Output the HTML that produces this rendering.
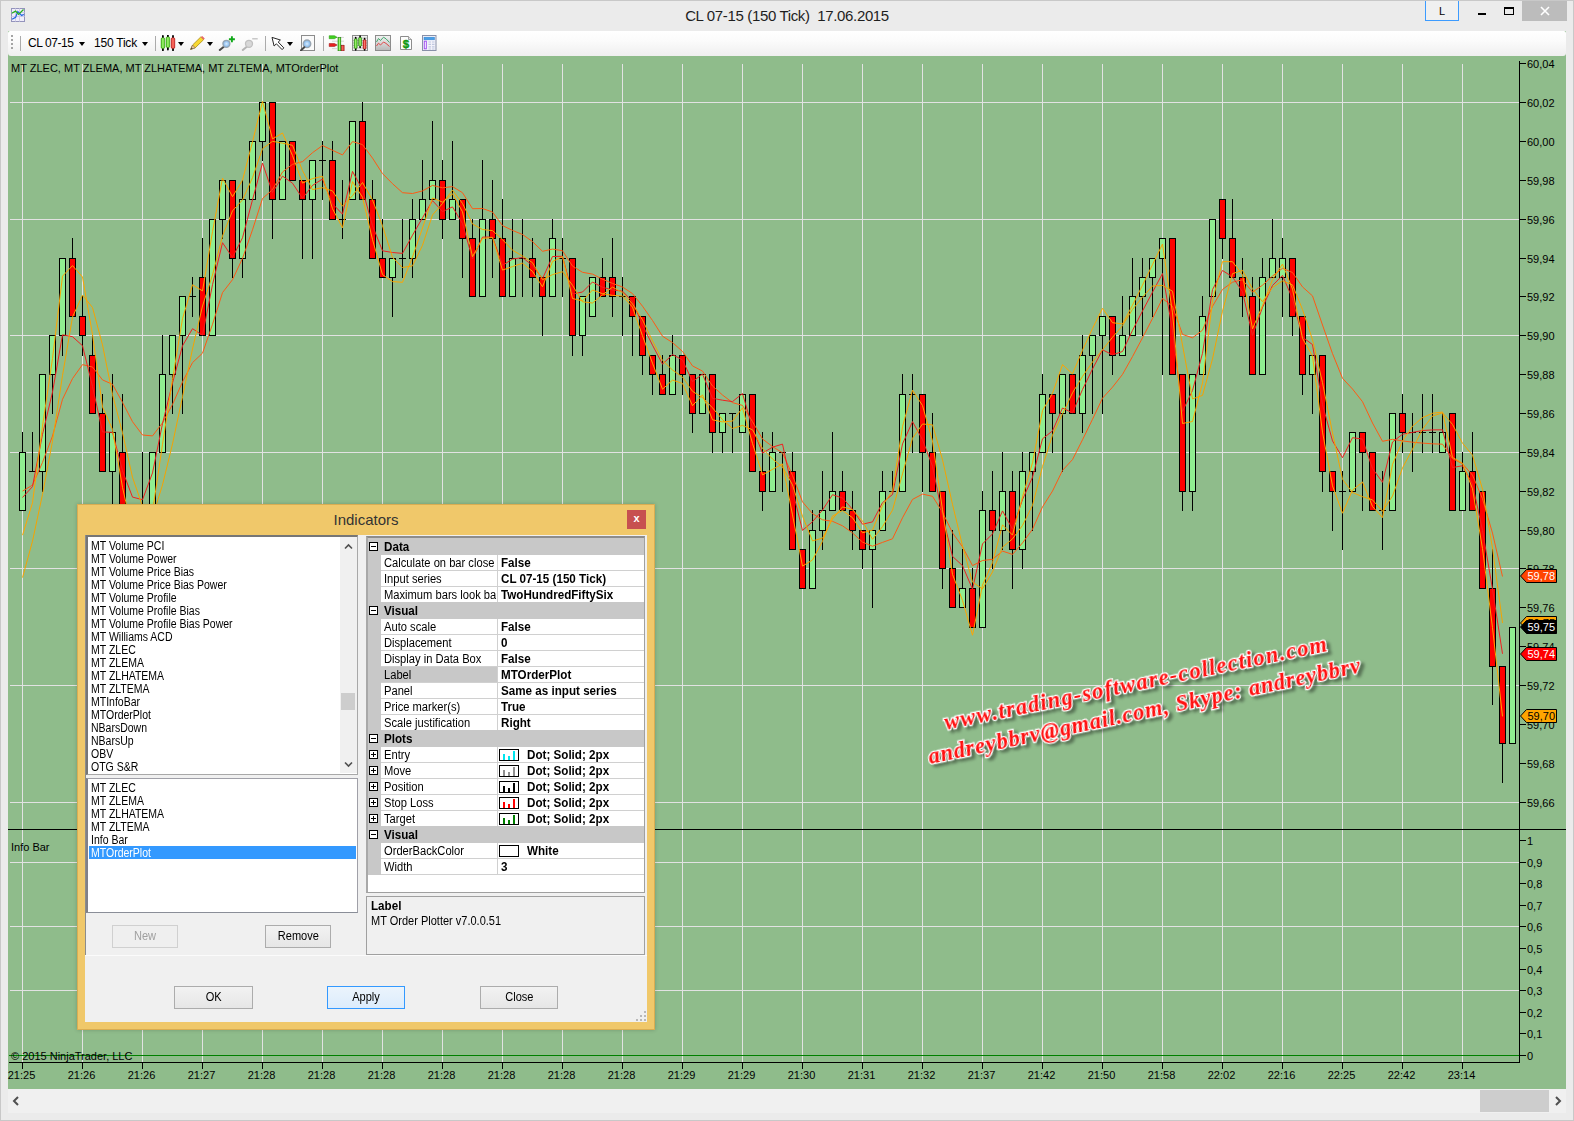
<!DOCTYPE html>
<html><head><meta charset="utf-8"><title>CL 07-15 (150 Tick) 17.06.2015</title>
<style>
html,body{margin:0;padding:0}
body{width:1574px;height:1121px;position:relative;overflow:hidden;background:#ebebeb;font-family:"Liberation Sans",sans-serif;font-size:11px;color:#000}
.abs{position:absolute}
#frame{left:0;top:0;width:1572px;height:1119px;border:1px solid #c8c8c8;box-sizing:content-box}
#title{left:0;top:6px;width:1574px;text-align:center;font-size:15px;line-height:19px;color:#1e1e1e;white-space:pre;letter-spacing:-0.35px}
#tbu{left:8px;top:31px;width:1558px;height:25px;background:#8fbc8b}
#toolbar{left:8px;top:31px;width:1558px;height:25px;border-radius:2px 2px 3px 3px;background:linear-gradient(#ffffff,#fbfbfb 40%,#efefef)}
#chart{left:8px;top:56px;width:1558px;height:1033px;background:#8fbc8b}
#sb{left:8px;top:1089px;width:1558px;height:24px;background:#f0f0f0}
#sbthumb{left:1480px;top:1090px;width:69px;height:22px;background:#cdcdcd}
svg text.ax, .ax{font-family:"Liberation Sans",sans-serif;font-size:11px}
.wm text{font-family:"Liberation Serif",serif;font-style:italic;font-weight:bold;font-size:22.5px;fill:#ff1010;stroke:#fff;stroke-width:2.6px;paint-order:stroke fill;filter:drop-shadow(3px 3px 1.5px rgba(0,0,0,.4))}
.tb{font-size:12px;line-height:14px;color:#000;white-space:pre}
.dd{width:0;height:0;border-left:3.5px solid transparent;border-right:3.5px solid transparent;border-top:4px solid #000}
.sep{width:1px;height:18px;background:#ababab;top:34px}
/* dialog */
#dlg{left:77px;top:504px;width:578px;height:526px;background:#f0c86a;box-sizing:border-box;border:1px solid #d9ad52;box-shadow:0 0 4px rgba(0,0,0,.2)}
#dlgc{left:85px;top:535px;width:562px;height:487px;background:#f0f0f0}
#dtitle{left:77px;top:510px;width:578px;text-align:center;font-size:15px;line-height:20px;color:#333}
#dclose{left:627px;top:510px;width:19px;height:19px;background:#c75050;color:#fff;text-align:center;font-weight:bold;font-size:11px;line-height:17px}
.lb{background:#fff;box-sizing:border-box;border:1px solid #828790}
.li{left:91px;width:300px;height:13px;line-height:13px;font-size:12px;white-space:pre;transform:scaleX(.875);transform-origin:0 0}
.btn{box-sizing:border-box;border:1px solid #acacac;background:linear-gradient(#f2f2f2,#e6e6e6);text-align:center;font-size:12px;line-height:21px;height:23px}
.btn span{display:inline-block;transform:scaleX(.92)}
.pg{font-size:12px;line-height:15px;white-space:pre;height:15px;transform:scaleX(.93);transform-origin:0 0}
.pgb{font-weight:bold;transform:scaleX(.97)}
.box{width:7px;height:7px;border:1px solid #000;background:#fff}
</style></head><body>
<div id="frame" class="abs"></div>
<!-- app icon -->
<svg class="abs" style="left:11px;top:8px" width="14" height="14" viewBox="0 0 14 14"><rect x="0.5" y="0.5" width="13" height="13" fill="#f0eefa" stroke="#9494bc"/><path d="M0.5 4.5H13.5M0.5 8.5H13.5M4.5 0.5V13.5M8.5 0.5V13.5" stroke="#d0cce8" stroke-width="1" fill="none"/><path d="M1.1 11.3L4.6 9.4L6.8 3.6L10.6 7.5L12.8 6.4" stroke="#2468e0" stroke-width="1.3" fill="none"/><path d="M0.7 5.3L4.6 3.1L7.6 6.4L12.5 1.5" stroke="#28b020" stroke-width="1.3" fill="none"/></svg>
<div id="title" class="abs">CL 07-15 (150 Tick)  17.06.2015</div>
<!-- window buttons -->
<div class="abs" style="left:1425px;top:1px;width:32px;height:19px;border:1px solid #3c9bff;border-top:none;background:#f0f0f0;text-align:center;font-size:11px;line-height:20px">L</div>
<div class="abs" style="left:1478px;top:13px;width:8px;height:2px;background:#000"></div>
<div class="abs" style="left:1504px;top:7px;width:8px;height:5px;border:1px solid #000;border-top:2px solid #000;box-sizing:content-box"></div>
<div class="abs" style="left:1522px;top:1px;width:45px;height:20px;background:#bcbcbc"></div>
<svg class="abs" style="left:1540px;top:6px" width="10" height="10" viewBox="0 0 10 10"><path d="M1 1L9 9M9 1L1 9" stroke="#fff" stroke-width="1.6"/></svg>
<div id="tbu" class="abs"></div><div id="toolbar" class="abs"></div>
<div class="abs" style="left:11px;top:35px;width:2px;height:2px;background:#a4a4a4"></div>
<div class="abs" style="left:11px;top:39px;width:2px;height:2px;background:#a4a4a4"></div>
<div class="abs" style="left:11px;top:43px;width:2px;height:2px;background:#a4a4a4"></div>
<div class="abs" style="left:11px;top:47px;width:2px;height:2px;background:#a4a4a4"></div>
<div class="abs sep" style="left:20px;top:36px;height:15px"></div>
<div class="abs tb" style="left:28px;top:36px;letter-spacing:-0.43px">CL 07-15</div>
<div class="abs dd" style="left:79px;top:42px"></div>
<div class="abs tb" style="left:94px;top:36px;letter-spacing:-0.22px">150 Tick</div>
<div class="abs dd" style="left:142px;top:42px"></div>
<div class="abs sep" style="left:155px;top:36px;height:15px"></div>
<svg class="abs" style="left:160px;top:35px" width="17" height="16" viewBox="0 0 17 16">
<defs><linearGradient id="gg" x1="0" x2="1" y1="0" y2="0"><stop offset="0" stop-color="#38c010"/><stop offset=".5" stop-color="#a8f878"/><stop offset="1" stop-color="#38c010"/></linearGradient>
<linearGradient id="rg" x1="0" x2="1" y1="0" y2="0"><stop offset="0" stop-color="#d81818"/><stop offset=".5" stop-color="#ff8070"/><stop offset="1" stop-color="#d81818"/></linearGradient></defs>
<path d="M2.9 1V15.3M7.9 0.3V14.5M13 1V15.3" stroke="#000" stroke-width="1.8" stroke-linecap="round"/>
<rect x="1.1" y="2.8" width="3.6" height="10.6" rx="1.2" fill="url(#gg)" stroke="#2a8a08" stroke-width=".5"/>
<rect x="6.1" y="1.9" width="3.6" height="10.6" rx="1.2" fill="url(#gg)" stroke="#2a8a08" stroke-width=".5"/>
<rect x="11.2" y="2.8" width="3.6" height="10.6" rx="1.2" fill="url(#rg)" stroke="#a01010" stroke-width=".5"/></svg>
<div class="abs dd" style="left:178px;top:42px"></div>
<svg class="abs" style="left:189px;top:35px" width="17" height="16" viewBox="0 0 17 16">
<path d="M1.6 14.4L3.6 10L11.8 1.9L14.6 4.7L6.2 12.8Z" fill="#f8d830" stroke="#a88a10" stroke-width=".8"/>
<path d="M1.6 14.4L3.6 10L6.2 12.8Z" fill="#e8c8a0" stroke="#806040" stroke-width=".6"/><path d="M1.6 14.4L2.5 12.4L3.8 13.6Z" fill="#404040"/>
<path d="M11.8 1.9L13.2 0.9L15.8 3.4L14.6 4.7Z" fill="#e86868"/></svg>
<div class="abs dd" style="left:207px;top:42px"></div>
<svg class="abs" style="left:218px;top:35px" width="18" height="16" viewBox="0 0 18 16">
<defs><radialGradient id="lg"><stop offset="0" stop-color="#d8ecff"/><stop offset="1" stop-color="#78b0e8"/></radialGradient></defs>
<path d="M1.8 15L5.8 11.8" stroke="#484848" stroke-width="2" stroke-linecap="round"/>
<circle cx="8.4" cy="8.8" r="3.5" fill="url(#lg)" stroke="#98a4b0" stroke-width="1.3"/>
<path d="M13.9 1.2V7.2M10.9 4.2H16.9" stroke="#10a818" stroke-width="1.9"/></svg>
<svg class="abs" style="left:241px;top:35px" width="18" height="16" viewBox="0 0 18 16">
<path d="M1.8 15L5.8 11.8" stroke="#b4b4b4" stroke-width="2" stroke-linecap="round"/>
<circle cx="8" cy="8.8" r="3.5" fill="#d8d8d8" stroke="#c0c0c0" stroke-width="1.3"/>
<path d="M11.2 3.8H16.7" stroke="#c0c0c0" stroke-width="1.3"/></svg>
<div class="abs sep" style="left:265px;top:36px;height:15px"></div>
<svg class="abs" style="left:270px;top:35px" width="16" height="16" viewBox="0 0 16 16">
<path d="M2 2.4L10.4 5L8.2 7L13.8 12.9L12.1 14.6L6.4 8.8L4.1 11Z" fill="#fff" stroke="#282828" stroke-width="1" stroke-linejoin="round"/></svg>
<div class="abs dd" style="left:287px;top:42px"></div>
<svg class="abs" style="left:300px;top:35px" width="16" height="16" viewBox="0 0 16 16">
<rect x="1.5" y="0.5" width="13" height="15" fill="#fafafa" stroke="#8c8c8c"/>
<circle cx="7" cy="8.8" r="3.8" fill="url(#lg)" stroke="#98a4b0" stroke-width="1.3"/>
<path d="M0.9 15.4L4.3 12.2" stroke="#484848" stroke-width="2" stroke-linecap="round"/></svg>
<div class="abs sep" style="left:323px;top:36px;height:15px"></div>
<svg class="abs" style="left:328px;top:35px" width="17" height="16" viewBox="0 0 17 16">
<path d="M7 2.4H16M4 6.2H16M7 10H16M4 13.6H9" stroke="#d4d4d4" stroke-width="1"/>
<path d="M1.2 0.7H6.5L9 2.2L6.5 3.7H1.2Z" fill="#40d020" stroke="#209008" stroke-width=".5"/>
<path d="M1.2 8.5H6.5L9 10L6.5 11.5H1.2Z" fill="#e82020" stroke="#981010" stroke-width=".5"/>
<rect x="10" y="2.6" width="2.8" height="13.2" fill="url(#gg)" stroke="#208008" stroke-width=".6"/><rect x="13.6" y="10.3" width="2.5" height="5.5" fill="url(#rg)" stroke="#901010" stroke-width=".6"/></svg>
<svg class="abs" style="left:352px;top:35px" width="16" height="16" viewBox="0 0 16 16">
<rect x="0.5" y="0.5" width="15" height="15" fill="#f0f0f0" stroke="#8c8c8c"/>
<path d="M1 3H15M1 5.5H15M1 8H15M1 10.5H15M1 13H15" stroke="#b0b0b0" stroke-width=".7"/>
<path d="M3.7 2.5V15M8.1 1V12.5M12.6 3.5V15" stroke="#000" stroke-width="1.6" stroke-linecap="round"/>
<rect x="2.2" y="3.8" width="3" height="9.6" rx="1" fill="url(#gg)" stroke="#207008" stroke-width=".5"/>
<rect x="6.6" y="2.4" width="3" height="8.8" rx="1" fill="url(#gg)" stroke="#207008" stroke-width=".5"/>
<rect x="11.1" y="4.8" width="3" height="9.2" rx="1" fill="url(#rg)" stroke="#901010" stroke-width=".5"/></svg>
<svg class="abs" style="left:375px;top:35px" width="16" height="16" viewBox="0 0 16 16">
<defs><linearGradient id="gr3" x1="0" x2="0" y1="0" y2="1"><stop offset="0" stop-color="#f4f4f4"/><stop offset="1" stop-color="#b8b8b8"/></linearGradient></defs>
<rect x="0.5" y="0.5" width="15" height="15" fill="url(#gr3)" stroke="#8c8c8c"/>
<path d="M1.5 7L3.5 3.5L5.5 5.5L8.5 2.2L11 3.8L14.5 7.5" stroke="#30a060" stroke-width=".9" fill="none"/>
<path d="M1.5 11L3.5 8.2L5.5 10L8.5 7L11 8.4L14.5 11.5" stroke="#e03838" stroke-width=".9" fill="none"/></svg>
<svg class="abs" style="left:399px;top:35px" width="14" height="16" viewBox="0 0 14 16">
<path d="M1.5 1.5H9.5L12.5 4.5V14.5H1.5Z" fill="#fdfdfd" stroke="#8c8c8c"/><path d="M9.5 1.5V4.5H12.5" fill="#e4e4e4" stroke="#8c8c8c" stroke-width=".8"/>
<text x="7" y="12.6" text-anchor="middle" font-family="Liberation Sans, sans-serif" font-weight="bold" font-size="11.5" fill="#129812" stroke="#129812" stroke-width=".4">$</text></svg>
<svg class="abs" style="left:422px;top:35px" width="15" height="16" viewBox="0 0 15 16">
<rect x="0.5" y="0.5" width="13.5" height="15" fill="#f2f2fa" stroke="#8890a8"/>
<rect x="2" y="2.2" width="10.5" height="2.6" fill="#48a0e8" stroke="#3080d0" stroke-width=".5"/>
<rect x="2.3" y="6.2" width="2" height="7.6" fill="#fff" stroke="#a050f0" stroke-width="1"/>
<path d="M6.5 7H12.5M6.5 9.4H12.5M6.5 11.8H12.5M6.5 14H12.5" stroke="#c0c8e0" stroke-width="1.2" stroke-dasharray="2.5 1"/></svg>
<div id="chart" class="abs"></div>
<svg class="abs" style="left:0;top:0" width="1574" height="1121" viewBox="0 0 1574 1121">
<rect x="22" y="64" width="1" height="998" fill="#e2e2e2"/>
<rect x="82" y="64" width="1" height="998" fill="#e2e2e2"/>
<rect x="142" y="64" width="1" height="998" fill="#e2e2e2"/>
<rect x="202" y="64" width="1" height="998" fill="#e2e2e2"/>
<rect x="262" y="64" width="1" height="998" fill="#e2e2e2"/>
<rect x="322" y="64" width="1" height="998" fill="#e2e2e2"/>
<rect x="382" y="64" width="1" height="998" fill="#e2e2e2"/>
<rect x="442" y="64" width="1" height="998" fill="#e2e2e2"/>
<rect x="502" y="64" width="1" height="998" fill="#e2e2e2"/>
<rect x="562" y="64" width="1" height="998" fill="#e2e2e2"/>
<rect x="622" y="64" width="1" height="998" fill="#e2e2e2"/>
<rect x="682" y="64" width="1" height="998" fill="#e2e2e2"/>
<rect x="742" y="64" width="1" height="998" fill="#e2e2e2"/>
<rect x="802" y="64" width="1" height="998" fill="#e2e2e2"/>
<rect x="862" y="64" width="1" height="998" fill="#e2e2e2"/>
<rect x="922" y="64" width="1" height="998" fill="#e2e2e2"/>
<rect x="982" y="64" width="1" height="998" fill="#e2e2e2"/>
<rect x="1042" y="64" width="1" height="998" fill="#e2e2e2"/>
<rect x="1102" y="64" width="1" height="998" fill="#e2e2e2"/>
<rect x="1162" y="64" width="1" height="998" fill="#e2e2e2"/>
<rect x="1222" y="64" width="1" height="998" fill="#e2e2e2"/>
<rect x="1282" y="64" width="1" height="998" fill="#e2e2e2"/>
<rect x="1342" y="64" width="1" height="998" fill="#e2e2e2"/>
<rect x="1402" y="64" width="1" height="998" fill="#e2e2e2"/>
<rect x="1462" y="64" width="1" height="998" fill="#e2e2e2"/>
<rect x="10" y="102" width="1509" height="1" fill="#e2e2e2"/>
<rect x="10" y="219" width="1509" height="1" fill="#e2e2e2"/>
<rect x="10" y="335" width="1509" height="1" fill="#e2e2e2"/>
<rect x="10" y="452" width="1509" height="1" fill="#e2e2e2"/>
<rect x="10" y="568" width="1509" height="1" fill="#e2e2e2"/>
<rect x="10" y="685" width="1509" height="1" fill="#e2e2e2"/>
<rect x="10" y="802" width="1509" height="1" fill="#e2e2e2"/>
<rect x="10" y="862" width="1509" height="1" fill="#e2e2e2"/>
<rect x="10" y="926" width="1509" height="1" fill="#e2e2e2"/>
<rect x="10" y="990" width="1509" height="1" fill="#e2e2e2"/>
<rect x="8" y="829" width="1558" height="1" fill="#000"/>
<rect x="9" y="1055" width="1510" height="1" fill="#008000"/>
<rect x="22" y="432" width="1" height="79" fill="#000"/>
<rect x="19.5" y="452.5" width="6" height="58" fill="#90ee90" stroke="#000" stroke-width="1"/>
<rect x="32" y="432" width="1" height="40" fill="#000"/>
<rect x="29" y="471" width="7" height="1" fill="#000"/>
<rect x="42" y="374" width="1" height="118" fill="#000"/>
<rect x="39.5" y="374.5" width="6" height="97" fill="#90ee90" stroke="#000" stroke-width="1"/>
<rect x="52" y="335" width="1" height="79" fill="#000"/>
<rect x="49.5" y="335.5" width="6" height="39" fill="#90ee90" stroke="#000" stroke-width="1"/>
<rect x="62" y="258" width="1" height="98" fill="#000"/>
<rect x="59.5" y="258.5" width="6" height="77" fill="#90ee90" stroke="#000" stroke-width="1"/>
<rect x="72" y="238" width="1" height="79" fill="#000"/>
<rect x="69.5" y="258.5" width="6" height="58" fill="#ff0000" stroke="#000" stroke-width="1"/>
<rect x="82" y="296" width="1" height="60" fill="#000"/>
<rect x="79.5" y="316.5" width="6" height="19" fill="#ff0000" stroke="#000" stroke-width="1"/>
<rect x="92" y="335" width="1" height="79" fill="#000"/>
<rect x="89.5" y="355.5" width="6" height="58" fill="#ff0000" stroke="#000" stroke-width="1"/>
<rect x="102" y="394" width="1" height="78" fill="#000"/>
<rect x="99.5" y="413.5" width="6" height="58" fill="#ff0000" stroke="#000" stroke-width="1"/>
<rect x="112" y="374" width="1" height="176" fill="#000"/>
<rect x="109.5" y="432.5" width="6" height="39" fill="#90ee90" stroke="#000" stroke-width="1"/>
<rect x="122" y="394" width="1" height="137" fill="#000"/>
<rect x="119.5" y="452.5" width="6" height="58" fill="#ff0000" stroke="#000" stroke-width="1"/>
<rect x="132" y="510" width="1" height="40" fill="#000"/>
<rect x="129.5" y="510.5" width="6" height="20" fill="#ff0000" stroke="#000" stroke-width="1"/>
<rect x="142" y="452" width="1" height="98" fill="#000"/>
<rect x="139.5" y="510.5" width="6" height="20" fill="#90ee90" stroke="#000" stroke-width="1"/>
<rect x="152" y="452" width="1" height="79" fill="#000"/>
<rect x="149.5" y="452.5" width="6" height="78" fill="#90ee90" stroke="#000" stroke-width="1"/>
<rect x="162" y="335" width="1" height="118" fill="#000"/>
<rect x="159.5" y="374.5" width="6" height="78" fill="#90ee90" stroke="#000" stroke-width="1"/>
<rect x="172" y="335" width="1" height="79" fill="#000"/>
<rect x="169.5" y="335.5" width="6" height="39" fill="#90ee90" stroke="#000" stroke-width="1"/>
<rect x="182" y="296" width="1" height="118" fill="#000"/>
<rect x="179.5" y="296.5" width="6" height="39" fill="#90ee90" stroke="#000" stroke-width="1"/>
<rect x="192" y="277" width="1" height="40" fill="#000"/>
<rect x="189" y="296" width="7" height="1" fill="#000"/>
<rect x="202" y="238" width="1" height="98" fill="#000"/>
<rect x="199.5" y="277.5" width="6" height="58" fill="#ff0000" stroke="#000" stroke-width="1"/>
<rect x="212" y="219" width="1" height="117" fill="#000"/>
<rect x="209.5" y="219.5" width="6" height="116" fill="#90ee90" stroke="#000" stroke-width="1"/>
<rect x="222" y="180" width="1" height="59" fill="#000"/>
<rect x="219.5" y="180.5" width="6" height="39" fill="#90ee90" stroke="#000" stroke-width="1"/>
<rect x="232" y="180" width="1" height="98" fill="#000"/>
<rect x="229.5" y="180.5" width="6" height="78" fill="#ff0000" stroke="#000" stroke-width="1"/>
<rect x="242" y="180" width="1" height="98" fill="#000"/>
<rect x="239.5" y="199.5" width="6" height="59" fill="#90ee90" stroke="#000" stroke-width="1"/>
<rect x="252" y="141" width="1" height="59" fill="#000"/>
<rect x="249.5" y="141.5" width="6" height="58" fill="#90ee90" stroke="#000" stroke-width="1"/>
<rect x="262" y="102" width="1" height="59" fill="#000"/>
<rect x="259.5" y="102.5" width="6" height="39" fill="#90ee90" stroke="#000" stroke-width="1"/>
<rect x="272" y="102" width="1" height="137" fill="#000"/>
<rect x="269.5" y="102.5" width="6" height="97" fill="#ff0000" stroke="#000" stroke-width="1"/>
<rect x="282" y="141" width="1" height="59" fill="#000"/>
<rect x="279.5" y="141.5" width="6" height="58" fill="#90ee90" stroke="#000" stroke-width="1"/>
<rect x="292" y="141" width="1" height="40" fill="#000"/>
<rect x="289.5" y="141.5" width="6" height="39" fill="#ff0000" stroke="#000" stroke-width="1"/>
<rect x="302" y="180" width="1" height="79" fill="#000"/>
<rect x="299.5" y="180.5" width="6" height="19" fill="#ff0000" stroke="#000" stroke-width="1"/>
<rect x="312" y="160" width="1" height="99" fill="#000"/>
<rect x="309.5" y="160.5" width="6" height="39" fill="#90ee90" stroke="#000" stroke-width="1"/>
<rect x="322" y="141" width="1" height="59" fill="#000"/>
<rect x="319" y="160" width="7" height="1" fill="#000"/>
<rect x="332" y="141" width="1" height="79" fill="#000"/>
<rect x="329.5" y="160.5" width="6" height="59" fill="#ff0000" stroke="#000" stroke-width="1"/>
<rect x="342" y="180" width="1" height="59" fill="#000"/>
<rect x="339" y="219" width="7" height="1" fill="#000"/>
<rect x="352" y="121" width="1" height="79" fill="#000"/>
<rect x="349.5" y="121.5" width="6" height="78" fill="#90ee90" stroke="#000" stroke-width="1"/>
<rect x="362" y="102" width="1" height="98" fill="#000"/>
<rect x="359.5" y="121.5" width="6" height="78" fill="#ff0000" stroke="#000" stroke-width="1"/>
<rect x="372" y="180" width="1" height="79" fill="#000"/>
<rect x="369.5" y="199.5" width="6" height="59" fill="#ff0000" stroke="#000" stroke-width="1"/>
<rect x="382" y="219" width="1" height="59" fill="#000"/>
<rect x="379.5" y="258.5" width="6" height="19" fill="#ff0000" stroke="#000" stroke-width="1"/>
<rect x="392" y="258" width="1" height="59" fill="#000"/>
<rect x="389.5" y="258.5" width="6" height="19" fill="#90ee90" stroke="#000" stroke-width="1"/>
<rect x="402" y="219" width="1" height="59" fill="#000"/>
<rect x="399" y="258" width="7" height="1" fill="#000"/>
<rect x="412" y="199" width="1" height="79" fill="#000"/>
<rect x="409.5" y="219.5" width="6" height="39" fill="#90ee90" stroke="#000" stroke-width="1"/>
<rect x="422" y="160" width="1" height="60" fill="#000"/>
<rect x="419.5" y="199.5" width="6" height="20" fill="#90ee90" stroke="#000" stroke-width="1"/>
<rect x="432" y="121" width="1" height="79" fill="#000"/>
<rect x="429.5" y="180.5" width="6" height="19" fill="#90ee90" stroke="#000" stroke-width="1"/>
<rect x="442" y="160" width="1" height="79" fill="#000"/>
<rect x="439.5" y="180.5" width="6" height="39" fill="#ff0000" stroke="#000" stroke-width="1"/>
<rect x="452" y="141" width="1" height="79" fill="#000"/>
<rect x="449.5" y="199.5" width="6" height="20" fill="#90ee90" stroke="#000" stroke-width="1"/>
<rect x="462" y="199" width="1" height="79" fill="#000"/>
<rect x="459.5" y="199.5" width="6" height="39" fill="#ff0000" stroke="#000" stroke-width="1"/>
<rect x="472" y="219" width="1" height="78" fill="#000"/>
<rect x="469.5" y="238.5" width="6" height="58" fill="#ff0000" stroke="#000" stroke-width="1"/>
<rect x="482" y="160" width="1" height="137" fill="#000"/>
<rect x="479.5" y="219.5" width="6" height="77" fill="#90ee90" stroke="#000" stroke-width="1"/>
<rect x="492" y="180" width="1" height="98" fill="#000"/>
<rect x="489.5" y="219.5" width="6" height="19" fill="#ff0000" stroke="#000" stroke-width="1"/>
<rect x="502" y="199" width="1" height="98" fill="#000"/>
<rect x="499.5" y="238.5" width="6" height="58" fill="#ff0000" stroke="#000" stroke-width="1"/>
<rect x="512" y="219" width="1" height="78" fill="#000"/>
<rect x="509.5" y="258.5" width="6" height="38" fill="#90ee90" stroke="#000" stroke-width="1"/>
<rect x="522" y="219" width="1" height="78" fill="#000"/>
<rect x="519" y="258" width="7" height="1" fill="#000"/>
<rect x="532" y="238" width="1" height="59" fill="#000"/>
<rect x="529.5" y="258.5" width="6" height="19" fill="#ff0000" stroke="#000" stroke-width="1"/>
<rect x="542" y="277" width="1" height="59" fill="#000"/>
<rect x="539.5" y="277.5" width="6" height="19" fill="#ff0000" stroke="#000" stroke-width="1"/>
<rect x="552" y="219" width="1" height="78" fill="#000"/>
<rect x="549.5" y="238.5" width="6" height="58" fill="#90ee90" stroke="#000" stroke-width="1"/>
<rect x="562" y="238" width="1" height="59" fill="#000"/>
<rect x="559" y="258" width="7" height="1" fill="#000"/>
<rect x="572" y="258" width="1" height="98" fill="#000"/>
<rect x="569.5" y="258.5" width="6" height="77" fill="#ff0000" stroke="#000" stroke-width="1"/>
<rect x="582" y="296" width="1" height="60" fill="#000"/>
<rect x="579.5" y="296.5" width="6" height="39" fill="#90ee90" stroke="#000" stroke-width="1"/>
<rect x="592" y="277" width="1" height="40" fill="#000"/>
<rect x="589.5" y="277.5" width="6" height="39" fill="#90ee90" stroke="#000" stroke-width="1"/>
<rect x="602" y="258" width="1" height="39" fill="#000"/>
<rect x="599.5" y="277.5" width="6" height="19" fill="#ff0000" stroke="#000" stroke-width="1"/>
<rect x="612" y="238" width="1" height="79" fill="#000"/>
<rect x="609.5" y="277.5" width="6" height="19" fill="#ff0000" stroke="#000" stroke-width="1"/>
<rect x="622" y="277" width="1" height="59" fill="#000"/>
<rect x="619" y="296" width="7" height="1" fill="#000"/>
<rect x="632" y="296" width="1" height="60" fill="#000"/>
<rect x="629.5" y="296.5" width="6" height="20" fill="#ff0000" stroke="#000" stroke-width="1"/>
<rect x="642" y="316" width="1" height="59" fill="#000"/>
<rect x="639.5" y="316.5" width="6" height="39" fill="#ff0000" stroke="#000" stroke-width="1"/>
<rect x="652" y="355" width="1" height="40" fill="#000"/>
<rect x="649.5" y="355.5" width="6" height="19" fill="#ff0000" stroke="#000" stroke-width="1"/>
<rect x="662" y="355" width="1" height="40" fill="#000"/>
<rect x="659.5" y="374.5" width="6" height="20" fill="#ff0000" stroke="#000" stroke-width="1"/>
<rect x="672" y="335" width="1" height="60" fill="#000"/>
<rect x="669.5" y="355.5" width="6" height="39" fill="#90ee90" stroke="#000" stroke-width="1"/>
<rect x="682" y="355" width="1" height="40" fill="#000"/>
<rect x="679.5" y="355.5" width="6" height="19" fill="#ff0000" stroke="#000" stroke-width="1"/>
<rect x="692" y="374" width="1" height="59" fill="#000"/>
<rect x="689.5" y="374.5" width="6" height="39" fill="#ff0000" stroke="#000" stroke-width="1"/>
<rect x="702" y="374" width="1" height="40" fill="#000"/>
<rect x="699.5" y="374.5" width="6" height="39" fill="#90ee90" stroke="#000" stroke-width="1"/>
<rect x="712" y="374" width="1" height="79" fill="#000"/>
<rect x="709.5" y="374.5" width="6" height="58" fill="#ff0000" stroke="#000" stroke-width="1"/>
<rect x="722" y="413" width="1" height="40" fill="#000"/>
<rect x="719.5" y="413.5" width="6" height="19" fill="#90ee90" stroke="#000" stroke-width="1"/>
<rect x="732" y="413" width="1" height="40" fill="#000"/>
<rect x="729" y="413" width="7" height="1" fill="#000"/>
<rect x="742" y="394" width="1" height="39" fill="#000"/>
<rect x="739.5" y="394.5" width="6" height="38" fill="#90ee90" stroke="#000" stroke-width="1"/>
<rect x="752" y="394" width="1" height="78" fill="#000"/>
<rect x="749.5" y="394.5" width="6" height="77" fill="#ff0000" stroke="#000" stroke-width="1"/>
<rect x="762" y="432" width="1" height="79" fill="#000"/>
<rect x="759.5" y="471.5" width="6" height="20" fill="#ff0000" stroke="#000" stroke-width="1"/>
<rect x="772" y="432" width="1" height="60" fill="#000"/>
<rect x="769.5" y="452.5" width="6" height="39" fill="#90ee90" stroke="#000" stroke-width="1"/>
<rect x="782" y="452" width="1" height="40" fill="#000"/>
<rect x="779" y="452" width="7" height="1" fill="#000"/>
<rect x="792" y="452" width="1" height="98" fill="#000"/>
<rect x="789.5" y="471.5" width="6" height="78" fill="#ff0000" stroke="#000" stroke-width="1"/>
<rect x="802" y="549" width="1" height="40" fill="#000"/>
<rect x="799.5" y="549.5" width="6" height="39" fill="#ff0000" stroke="#000" stroke-width="1"/>
<rect x="812" y="510" width="1" height="79" fill="#000"/>
<rect x="809.5" y="530.5" width="6" height="58" fill="#90ee90" stroke="#000" stroke-width="1"/>
<rect x="822" y="471" width="1" height="79" fill="#000"/>
<rect x="819.5" y="510.5" width="6" height="20" fill="#90ee90" stroke="#000" stroke-width="1"/>
<rect x="832" y="432" width="1" height="79" fill="#000"/>
<rect x="829.5" y="491.5" width="6" height="19" fill="#90ee90" stroke="#000" stroke-width="1"/>
<rect x="842" y="471" width="1" height="40" fill="#000"/>
<rect x="839.5" y="491.5" width="6" height="19" fill="#ff0000" stroke="#000" stroke-width="1"/>
<rect x="852" y="491" width="1" height="59" fill="#000"/>
<rect x="849.5" y="510.5" width="6" height="20" fill="#ff0000" stroke="#000" stroke-width="1"/>
<rect x="862" y="530" width="1" height="39" fill="#000"/>
<rect x="859.5" y="530.5" width="6" height="19" fill="#ff0000" stroke="#000" stroke-width="1"/>
<rect x="872" y="530" width="1" height="78" fill="#000"/>
<rect x="869.5" y="530.5" width="6" height="19" fill="#90ee90" stroke="#000" stroke-width="1"/>
<rect x="882" y="471" width="1" height="60" fill="#000"/>
<rect x="879.5" y="491.5" width="6" height="39" fill="#90ee90" stroke="#000" stroke-width="1"/>
<rect x="892" y="471" width="1" height="21" fill="#000"/>
<rect x="889" y="491" width="7" height="1" fill="#000"/>
<rect x="902" y="374" width="1" height="118" fill="#000"/>
<rect x="899.5" y="394.5" width="6" height="97" fill="#90ee90" stroke="#000" stroke-width="1"/>
<rect x="912" y="374" width="1" height="79" fill="#000"/>
<rect x="909" y="394" width="7" height="1" fill="#000"/>
<rect x="922" y="394" width="1" height="98" fill="#000"/>
<rect x="919.5" y="394.5" width="6" height="58" fill="#ff0000" stroke="#000" stroke-width="1"/>
<rect x="932" y="413" width="1" height="79" fill="#000"/>
<rect x="929.5" y="452.5" width="6" height="39" fill="#ff0000" stroke="#000" stroke-width="1"/>
<rect x="942" y="491" width="1" height="98" fill="#000"/>
<rect x="939.5" y="491.5" width="6" height="77" fill="#ff0000" stroke="#000" stroke-width="1"/>
<rect x="952" y="530" width="1" height="78" fill="#000"/>
<rect x="949.5" y="568.5" width="6" height="39" fill="#ff0000" stroke="#000" stroke-width="1"/>
<rect x="962" y="549" width="1" height="59" fill="#000"/>
<rect x="959.5" y="588.5" width="6" height="19" fill="#90ee90" stroke="#000" stroke-width="1"/>
<rect x="972" y="568" width="1" height="60" fill="#000"/>
<rect x="969.5" y="588.5" width="6" height="39" fill="#ff0000" stroke="#000" stroke-width="1"/>
<rect x="982" y="491" width="1" height="137" fill="#000"/>
<rect x="979.5" y="510.5" width="6" height="117" fill="#90ee90" stroke="#000" stroke-width="1"/>
<rect x="992" y="471" width="1" height="98" fill="#000"/>
<rect x="989.5" y="510.5" width="6" height="20" fill="#ff0000" stroke="#000" stroke-width="1"/>
<rect x="1002" y="452" width="1" height="98" fill="#000"/>
<rect x="999.5" y="491.5" width="6" height="39" fill="#90ee90" stroke="#000" stroke-width="1"/>
<rect x="1012" y="471" width="1" height="118" fill="#000"/>
<rect x="1009.5" y="491.5" width="6" height="58" fill="#ff0000" stroke="#000" stroke-width="1"/>
<rect x="1022" y="452" width="1" height="117" fill="#000"/>
<rect x="1019.5" y="471.5" width="6" height="78" fill="#90ee90" stroke="#000" stroke-width="1"/>
<rect x="1032" y="452" width="1" height="79" fill="#000"/>
<rect x="1029.5" y="452.5" width="6" height="19" fill="#90ee90" stroke="#000" stroke-width="1"/>
<rect x="1042" y="374" width="1" height="79" fill="#000"/>
<rect x="1039.5" y="394.5" width="6" height="58" fill="#90ee90" stroke="#000" stroke-width="1"/>
<rect x="1052" y="394" width="1" height="59" fill="#000"/>
<rect x="1049.5" y="394.5" width="6" height="19" fill="#ff0000" stroke="#000" stroke-width="1"/>
<rect x="1062" y="374" width="1" height="98" fill="#000"/>
<rect x="1059.5" y="374.5" width="6" height="39" fill="#90ee90" stroke="#000" stroke-width="1"/>
<rect x="1072" y="374" width="1" height="40" fill="#000"/>
<rect x="1069.5" y="374.5" width="6" height="39" fill="#ff0000" stroke="#000" stroke-width="1"/>
<rect x="1082" y="335" width="1" height="98" fill="#000"/>
<rect x="1079.5" y="355.5" width="6" height="58" fill="#90ee90" stroke="#000" stroke-width="1"/>
<rect x="1092" y="335" width="1" height="79" fill="#000"/>
<rect x="1089.5" y="335.5" width="6" height="20" fill="#90ee90" stroke="#000" stroke-width="1"/>
<rect x="1102" y="316" width="1" height="98" fill="#000"/>
<rect x="1099.5" y="316.5" width="6" height="19" fill="#90ee90" stroke="#000" stroke-width="1"/>
<rect x="1112" y="316" width="1" height="59" fill="#000"/>
<rect x="1109.5" y="316.5" width="6" height="39" fill="#ff0000" stroke="#000" stroke-width="1"/>
<rect x="1122" y="296" width="1" height="60" fill="#000"/>
<rect x="1119.5" y="335.5" width="6" height="20" fill="#90ee90" stroke="#000" stroke-width="1"/>
<rect x="1132" y="258" width="1" height="78" fill="#000"/>
<rect x="1129.5" y="296.5" width="6" height="39" fill="#90ee90" stroke="#000" stroke-width="1"/>
<rect x="1142" y="258" width="1" height="78" fill="#000"/>
<rect x="1139.5" y="277.5" width="6" height="19" fill="#90ee90" stroke="#000" stroke-width="1"/>
<rect x="1152" y="258" width="1" height="59" fill="#000"/>
<rect x="1149.5" y="258.5" width="6" height="19" fill="#90ee90" stroke="#000" stroke-width="1"/>
<rect x="1162" y="238" width="1" height="137" fill="#000"/>
<rect x="1159.5" y="238.5" width="6" height="20" fill="#90ee90" stroke="#000" stroke-width="1"/>
<rect x="1172" y="238" width="1" height="137" fill="#000"/>
<rect x="1169.5" y="238.5" width="6" height="136" fill="#ff0000" stroke="#000" stroke-width="1"/>
<rect x="1182" y="374" width="1" height="137" fill="#000"/>
<rect x="1179.5" y="374.5" width="6" height="117" fill="#ff0000" stroke="#000" stroke-width="1"/>
<rect x="1192" y="374" width="1" height="137" fill="#000"/>
<rect x="1189.5" y="374.5" width="6" height="117" fill="#90ee90" stroke="#000" stroke-width="1"/>
<rect x="1202" y="296" width="1" height="79" fill="#000"/>
<rect x="1199.5" y="316.5" width="6" height="58" fill="#90ee90" stroke="#000" stroke-width="1"/>
<rect x="1212" y="219" width="1" height="78" fill="#000"/>
<rect x="1209.5" y="219.5" width="6" height="77" fill="#90ee90" stroke="#000" stroke-width="1"/>
<rect x="1222" y="199" width="1" height="60" fill="#000"/>
<rect x="1219.5" y="199.5" width="6" height="39" fill="#ff0000" stroke="#000" stroke-width="1"/>
<rect x="1232" y="199" width="1" height="79" fill="#000"/>
<rect x="1229.5" y="238.5" width="6" height="39" fill="#ff0000" stroke="#000" stroke-width="1"/>
<rect x="1242" y="258" width="1" height="59" fill="#000"/>
<rect x="1239.5" y="277.5" width="6" height="19" fill="#ff0000" stroke="#000" stroke-width="1"/>
<rect x="1252" y="277" width="1" height="98" fill="#000"/>
<rect x="1249.5" y="296.5" width="6" height="78" fill="#ff0000" stroke="#000" stroke-width="1"/>
<rect x="1262" y="258" width="1" height="117" fill="#000"/>
<rect x="1259.5" y="277.5" width="6" height="97" fill="#90ee90" stroke="#000" stroke-width="1"/>
<rect x="1272" y="219" width="1" height="59" fill="#000"/>
<rect x="1269.5" y="258.5" width="6" height="19" fill="#90ee90" stroke="#000" stroke-width="1"/>
<rect x="1282" y="238" width="1" height="79" fill="#000"/>
<rect x="1279.5" y="258.5" width="6" height="19" fill="#90ee90" stroke="#000" stroke-width="1"/>
<rect x="1292" y="258" width="1" height="78" fill="#000"/>
<rect x="1289.5" y="258.5" width="6" height="58" fill="#ff0000" stroke="#000" stroke-width="1"/>
<rect x="1302" y="316" width="1" height="79" fill="#000"/>
<rect x="1299.5" y="316.5" width="6" height="58" fill="#ff0000" stroke="#000" stroke-width="1"/>
<rect x="1312" y="355" width="1" height="59" fill="#000"/>
<rect x="1309.5" y="355.5" width="6" height="19" fill="#90ee90" stroke="#000" stroke-width="1"/>
<rect x="1322" y="355" width="1" height="137" fill="#000"/>
<rect x="1319.5" y="355.5" width="6" height="116" fill="#ff0000" stroke="#000" stroke-width="1"/>
<rect x="1332" y="471" width="1" height="60" fill="#000"/>
<rect x="1329.5" y="471.5" width="6" height="20" fill="#ff0000" stroke="#000" stroke-width="1"/>
<rect x="1342" y="471" width="1" height="79" fill="#000"/>
<rect x="1339" y="491" width="7" height="1" fill="#000"/>
<rect x="1352" y="432" width="1" height="60" fill="#000"/>
<rect x="1349.5" y="432.5" width="6" height="59" fill="#90ee90" stroke="#000" stroke-width="1"/>
<rect x="1362" y="432" width="1" height="79" fill="#000"/>
<rect x="1359.5" y="432.5" width="6" height="20" fill="#ff0000" stroke="#000" stroke-width="1"/>
<rect x="1372" y="452" width="1" height="59" fill="#000"/>
<rect x="1369.5" y="452.5" width="6" height="58" fill="#ff0000" stroke="#000" stroke-width="1"/>
<rect x="1382" y="471" width="1" height="79" fill="#000"/>
<rect x="1379" y="510" width="7" height="1" fill="#000"/>
<rect x="1392" y="413" width="1" height="98" fill="#000"/>
<rect x="1389.5" y="413.5" width="6" height="97" fill="#90ee90" stroke="#000" stroke-width="1"/>
<rect x="1402" y="394" width="1" height="59" fill="#000"/>
<rect x="1399.5" y="413.5" width="6" height="19" fill="#ff0000" stroke="#000" stroke-width="1"/>
<rect x="1412" y="413" width="1" height="59" fill="#000"/>
<rect x="1409" y="432" width="7" height="1" fill="#000"/>
<rect x="1422" y="394" width="1" height="59" fill="#000"/>
<rect x="1419" y="432" width="7" height="1" fill="#000"/>
<rect x="1432" y="394" width="1" height="59" fill="#000"/>
<rect x="1429" y="432" width="7" height="1" fill="#000"/>
<rect x="1442" y="413" width="1" height="40" fill="#000"/>
<rect x="1439.5" y="432.5" width="6" height="20" fill="#90ee90" stroke="#000" stroke-width="1"/>
<rect x="1452" y="413" width="1" height="98" fill="#000"/>
<rect x="1449.5" y="413.5" width="6" height="97" fill="#ff0000" stroke="#000" stroke-width="1"/>
<rect x="1462" y="452" width="1" height="59" fill="#000"/>
<rect x="1459.5" y="471.5" width="6" height="39" fill="#90ee90" stroke="#000" stroke-width="1"/>
<rect x="1472" y="432" width="1" height="79" fill="#000"/>
<rect x="1469.5" y="471.5" width="6" height="39" fill="#ff0000" stroke="#000" stroke-width="1"/>
<rect x="1482" y="491" width="1" height="98" fill="#000"/>
<rect x="1479.5" y="491.5" width="6" height="97" fill="#ff0000" stroke="#000" stroke-width="1"/>
<rect x="1492" y="549" width="1" height="156" fill="#000"/>
<rect x="1489.5" y="588.5" width="6" height="78" fill="#ff0000" stroke="#000" stroke-width="1"/>
<rect x="1502" y="666" width="1" height="117" fill="#000"/>
<rect x="1499.5" y="666.5" width="6" height="77" fill="#ff0000" stroke="#000" stroke-width="1"/>
<rect x="1512" y="627" width="1" height="117" fill="#000"/>
<rect x="1509.5" y="627.5" width="6" height="116" fill="#90ee90" stroke="#000" stroke-width="1"/>
<polyline points="22.5,491.1 32.5,485.1 42.5,462.4 52.5,436.0 62.5,399.3 72.5,378.6 82.5,364.6 92.5,367.0 102.5,379.9 112.5,384.3 122.5,402.4 132.5,421.7 142.5,435.0 152.5,435.9 162.5,422.8 172.5,404.5 182.5,381.9 192.5,362.6 202.5,353.2 212.5,324.3 222.5,292.6 232.5,279.7 242.5,258.4 252.5,229.8 262.5,198.5 272.5,189.7 282.5,172.0 292.5,164.3 302.5,161.6 312.5,152.7 322.5,145.5 332.5,150.3 342.5,154.9 352.5,141.6 362.5,144.6 372.5,158.1 382.5,173.6 392.5,183.7 402.5,192.7 412.5,193.5 422.5,190.9 432.5,185.4 442.5,187.8 452.5,186.6 462.5,192.7 472.5,208.7 482.5,208.5 492.5,212.0 502.5,225.6 512.5,230.4 522.5,234.5 532.5,241.6 542.5,251.3 552.5,249.1 562.5,250.7 572.5,266.1 582.5,272.3 592.5,274.1 602.5,279.2 612.5,283.4 622.5,287.0 632.5,293.6 642.5,306.2 652.5,320.5 662.5,336.2 672.5,342.6 682.5,351.4 692.5,365.9 702.5,371.1 712.5,386.0 722.5,395.0 732.5,402.6 742.5,405.4 752.5,421.7 762.5,439.0 772.5,446.6 782.5,452.8 792.5,475.5 802.5,501.9 812.5,513.6 822.5,519.8 832.5,521.3 842.5,525.8 852.5,532.9 862.5,542.1 872.5,546.2 882.5,542.4 892.5,538.8 902.5,517.8 912.5,499.4 922.5,494.1 932.5,496.3 942.5,512.2 952.5,532.8 962.5,546.8 972.5,565.6 982.5,560.5 992.5,559.3 1002.5,551.1 1012.5,554.4 1022.5,542.9 1032.5,529.3 1042.5,506.9 1052.5,491.1 1062.5,470.4 1072.5,459.6 1082.5,439.8 1092.5,419.3 1102.5,398.2 1112.5,387.2 1122.5,374.4 1132.5,356.6 1142.5,337.8 1152.5,318.5 1162.5,298.5 1172.5,306.3 1182.5,334.4 1192.5,337.8 1202.5,330.2 1212.5,306.3 1222.5,289.4 1232.5,282.2 1242.5,279.8 1252.5,292.1 1262.5,285.2 1272.5,276.0 1282.5,268.3 1292.5,272.5 1302.5,286.9 1312.5,295.9 1322.5,325.0 1332.5,353.6 1342.5,378.3 1352.5,389.0 1362.5,401.7 1372.5,423.0 1382.5,441.3 1392.5,439.3 1402.5,440.9 1412.5,442.2 1422.5,443.1 1432.5,443.8 1442.5,444.2 1452.5,458.6 1462.5,463.8 1472.5,475.1 1482.5,498.8 1492.5,533.1 1502.5,576.5" fill="none" stroke="#ff5a14" stroke-width="1" stroke-linejoin="round"/>
<polyline points="22.5,497.5 32.5,486.6 42.5,434.4 52.5,392.1 62.5,334.8 72.5,336.7 82.5,345.7 92.5,386.4 102.5,431.9 112.5,432.4 122.5,470.7 132.5,497.1 142.5,499.7 152.5,472.9 162.5,423.7 172.5,383.1 182.5,345.8 192.5,328.7 202.5,335.2 212.5,284.7 222.5,242.7 232.5,257.5 242.5,237.8 252.5,199.8 262.5,163.0 272.5,192.6 282.5,176.1 292.5,183.2 302.5,198.3 312.5,185.4 322.5,179.0 332.5,203.8 342.5,214.2 352.5,171.4 362.5,189.8 372.5,225.7 382.5,250.8 392.5,252.5 402.5,253.4 412.5,235.2 422.5,217.8 432.5,200.6 442.5,211.6 452.5,206.9 462.5,223.5 472.5,259.0 482.5,237.1 492.5,237.0 502.5,265.3 512.5,259.1 522.5,257.5 532.5,265.5 542.5,278.7 552.5,256.5 562.5,256.3 572.5,294.0 582.5,292.0 592.5,282.0 602.5,287.3 612.5,289.9 622.5,291.2 632.5,301.4 642.5,325.0 652.5,345.2 662.5,364.1 672.5,354.6 682.5,359.9 692.5,381.6 702.5,374.1 712.5,398.3 722.5,400.2 732.5,401.6 742.5,393.5 752.5,427.9 762.5,453.1 772.5,447.2 782.5,444.1 792.5,490.4 802.5,530.4 812.5,521.7 822.5,510.1 832.5,494.7 842.5,498.0 852.5,509.3 862.5,524.2 872.5,521.9 882.5,502.6 892.5,494.5 902.5,443.9 912.5,421.6 922.5,439.7 932.5,466.2 942.5,515.6 952.5,556.4 962.5,565.6 972.5,589.2 982.5,543.9 992.5,533.9 1002.5,510.9 1012.5,529.2 1022.5,499.6 1032.5,477.2 1042.5,438.8 1052.5,430.9 1062.5,408.0 1072.5,412.9 1082.5,389.5 1092.5,369.0 1102.5,349.8 1112.5,354.8 1122.5,351.5 1132.5,330.4 1142.5,311.0 1152.5,292.2 1162.5,273.5 1172.5,330.4 1182.5,411.4 1192.5,390.5 1202.5,353.3 1212.5,289.6 1222.5,270.5 1232.5,276.9 1242.5,291.8 1252.5,335.5 1262.5,307.4 1272.5,285.5 1282.5,275.4 1292.5,298.8 1302.5,337.1 1312.5,344.6 1322.5,404.6 1332.5,440.9 1342.5,457.7 1352.5,437.7 1362.5,439.1 1372.5,468.6 1382.5,482.3 1392.5,442.0 1402.5,434.2 1412.5,432.4 1422.5,430.5 1432.5,429.9 1442.5,429.8 1452.5,467.6 1462.5,465.7 1472.5,484.1 1482.5,530.4 1492.5,589.2 1502.5,653.8" fill="none" stroke="#f02020" stroke-width="1" stroke-linejoin="round"/>
<polyline points="22.5,577.6 32.5,541.2 42.5,494.4 52.5,441.1 62.5,375.5 72.5,317.0 82.5,295.1 92.5,307.5 102.5,344.9 112.5,394.6 122.5,432.8 132.5,477.3 142.5,506.3 152.5,516.9 162.5,484.9 172.5,443.9 182.5,396.8 192.5,349.0 202.5,306.0 212.5,275.0 222.5,236.0 232.5,210.9 242.5,199.9 252.5,177.7 262.5,148.7 272.5,141.3 282.5,143.2 292.5,145.3 302.5,170.6 312.5,189.6 322.5,187.7 332.5,190.9 342.5,206.2 352.5,195.7 362.5,182.5 372.5,200.0 382.5,225.8 392.5,257.4 402.5,267.5 412.5,265.9 422.5,245.3 432.5,214.9 442.5,203.5 452.5,190.1 462.5,203.4 472.5,224.0 482.5,229.5 492.5,230.6 502.5,239.6 512.5,250.2 522.5,256.0 532.5,262.7 542.5,279.8 552.5,274.6 562.5,271.7 572.5,285.3 582.5,301.8 592.5,303.0 602.5,294.8 612.5,287.1 622.5,292.6 632.5,304.0 642.5,319.9 652.5,340.9 662.5,360.4 672.5,370.0 682.5,377.1 692.5,391.3 702.5,397.6 712.5,407.8 722.5,419.7 732.5,428.4 742.5,425.4 752.5,429.8 762.5,448.5 772.5,459.0 782.5,466.9 792.5,484.9 802.5,516.2 812.5,540.9 822.5,538.2 832.5,519.0 842.5,506.9 852.5,509.6 862.5,521.1 872.5,539.3 882.5,526.6 892.5,510.2 902.5,473.9 912.5,438.3 922.5,424.0 932.5,424.8 942.5,459.7 952.5,504.4 962.5,545.7 972.5,582.1 982.5,588.9 992.5,572.0 1002.5,547.1 1012.5,538.9 1022.5,525.4 1032.5,505.4 1042.5,466.5 1052.5,435.1 1062.5,413.8 1072.5,392.9 1082.5,376.4 1092.5,362.0 1102.5,349.7 1112.5,337.3 1122.5,325.6 1132.5,309.4 1142.5,297.2 1152.5,285.9 1162.5,285.5 1172.5,291.2 1182.5,345.1 1192.5,398.9 1202.5,395.4 1212.5,358.9 1222.5,311.2 1232.5,273.7 1242.5,270.3 1252.5,288.8 1262.5,301.7 1272.5,287.5 1282.5,280.9 1292.5,284.9 1302.5,309.5 1312.5,339.8 1322.5,382.7 1332.5,432.8 1342.5,479.3 1352.5,492.5 1362.5,496.7 1372.5,499.9 1382.5,511.3 1392.5,496.0 1402.5,467.9 1412.5,449.2 1422.5,429.2 1432.5,416.1 1442.5,412.8 1452.5,424.4 1462.5,443.2 1472.5,455.1 1482.5,489.2 1492.5,548.1 1502.5,623.0" fill="none" stroke="#f5a300" stroke-width="1" stroke-linejoin="round"/>
<polyline points="22.5,535.2 32.5,502.8 42.5,426.2 52.5,358.5 62.5,276.2 72.5,265.6 82.5,277.0 92.5,334.5 102.5,406.9 112.5,429.5 122.5,487.3 132.5,531.2 142.5,542.8 152.5,511.7 162.5,444.3 172.5,379.5 182.5,318.7 192.5,284.8 202.5,290.9 212.5,231.7 222.5,178.2 232.5,196.7 242.5,180.2 252.5,141.8 262.5,101.4 272.5,138.9 282.5,133.0 292.5,155.5 302.5,183.1 312.5,178.6 322.5,176.3 332.5,208.7 342.5,227.8 352.5,181.6 362.5,197.3 372.5,239.6 382.5,274.6 392.5,281.6 402.5,282.3 412.5,257.0 422.5,228.0 432.5,198.0 442.5,202.1 452.5,193.8 462.5,211.8 472.5,256.7 482.5,238.4 492.5,237.5 502.5,270.1 512.5,266.6 522.5,263.2 532.5,271.4 542.5,286.8 552.5,261.5 562.5,256.6 572.5,298.5 582.5,300.9 592.5,290.0 602.5,293.7 612.5,295.4 622.5,296.0 632.5,307.1 642.5,335.8 652.5,363.2 662.5,389.2 672.5,380.1 682.5,383.4 692.5,405.7 702.5,394.8 712.5,419.8 722.5,421.9 732.5,421.1 742.5,407.8 752.5,443.4 762.5,474.9 772.5,469.4 782.5,463.9 792.5,514.9 802.5,566.1 812.5,560.0 822.5,541.3 832.5,516.1 842.5,510.5 852.5,517.7 862.5,532.8 872.5,530.1 882.5,505.6 892.5,490.8 902.5,426.7 912.5,390.2 922.5,405.5 932.5,441.0 942.5,509.8 952.5,574.4 962.5,600.4 972.5,635.2 982.5,585.1 992.5,562.6 1002.5,524.8 1012.5,535.1 1022.5,496.7 1032.5,462.8 1042.5,410.6 1052.5,393.4 1062.5,364.6 1072.5,373.9 1082.5,350.2 1092.5,328.5 1102.5,308.3 1112.5,322.7 1122.5,324.0 1132.5,305.2 1142.5,285.2 1152.5,264.7 1162.5,244.0 1172.5,312.9 1182.5,423.5 1192.5,421.5 1202.5,382.9 1212.5,300.7 1222.5,261.6 1232.5,261.7 1242.5,274.8 1252.5,328.8 1262.5,305.5 1272.5,279.6 1282.5,264.1 1292.5,289.1 1302.5,338.3 1312.5,356.1 1322.5,432.1 1332.5,485.9 1342.5,513.2 1352.5,490.1 1362.5,482.0 1372.5,506.5 1382.5,517.5 1392.5,464.4 1402.5,441.0 1412.5,426.2 1422.5,417.6 1432.5,413.3 1442.5,412.0 1452.5,457.4 1462.5,463.1 1472.5,488.8 1482.5,548.6 1492.5,627.7 1502.5,716.4" fill="none" stroke="#ffa500" stroke-width="1" stroke-linejoin="round"/>
<rect x="1519" y="61" width="1" height="1002" fill="#000"/>
<rect x="9" y="1062" width="1511" height="1" fill="#000"/>
<rect x="22" y="1062" width="1" height="7" fill="#000"/>
<text x="21.5" y="1079" text-anchor="middle" class="ax">21:25</text>
<rect x="82" y="1062" width="1" height="7" fill="#000"/>
<text x="81.5" y="1079" text-anchor="middle" class="ax">21:26</text>
<rect x="142" y="1062" width="1" height="7" fill="#000"/>
<text x="141.5" y="1079" text-anchor="middle" class="ax">21:26</text>
<rect x="202" y="1062" width="1" height="7" fill="#000"/>
<text x="201.5" y="1079" text-anchor="middle" class="ax">21:27</text>
<rect x="262" y="1062" width="1" height="7" fill="#000"/>
<text x="261.5" y="1079" text-anchor="middle" class="ax">21:28</text>
<rect x="322" y="1062" width="1" height="7" fill="#000"/>
<text x="321.5" y="1079" text-anchor="middle" class="ax">21:28</text>
<rect x="382" y="1062" width="1" height="7" fill="#000"/>
<text x="381.5" y="1079" text-anchor="middle" class="ax">21:28</text>
<rect x="442" y="1062" width="1" height="7" fill="#000"/>
<text x="441.5" y="1079" text-anchor="middle" class="ax">21:28</text>
<rect x="502" y="1062" width="1" height="7" fill="#000"/>
<text x="501.5" y="1079" text-anchor="middle" class="ax">21:28</text>
<rect x="562" y="1062" width="1" height="7" fill="#000"/>
<text x="561.5" y="1079" text-anchor="middle" class="ax">21:28</text>
<rect x="622" y="1062" width="1" height="7" fill="#000"/>
<text x="621.5" y="1079" text-anchor="middle" class="ax">21:28</text>
<rect x="682" y="1062" width="1" height="7" fill="#000"/>
<text x="681.5" y="1079" text-anchor="middle" class="ax">21:29</text>
<rect x="742" y="1062" width="1" height="7" fill="#000"/>
<text x="741.5" y="1079" text-anchor="middle" class="ax">21:29</text>
<rect x="802" y="1062" width="1" height="7" fill="#000"/>
<text x="801.5" y="1079" text-anchor="middle" class="ax">21:30</text>
<rect x="862" y="1062" width="1" height="7" fill="#000"/>
<text x="861.5" y="1079" text-anchor="middle" class="ax">21:31</text>
<rect x="922" y="1062" width="1" height="7" fill="#000"/>
<text x="921.5" y="1079" text-anchor="middle" class="ax">21:32</text>
<rect x="982" y="1062" width="1" height="7" fill="#000"/>
<text x="981.5" y="1079" text-anchor="middle" class="ax">21:37</text>
<rect x="1042" y="1062" width="1" height="7" fill="#000"/>
<text x="1041.5" y="1079" text-anchor="middle" class="ax">21:42</text>
<rect x="1102" y="1062" width="1" height="7" fill="#000"/>
<text x="1101.5" y="1079" text-anchor="middle" class="ax">21:50</text>
<rect x="1162" y="1062" width="1" height="7" fill="#000"/>
<text x="1161.5" y="1079" text-anchor="middle" class="ax">21:58</text>
<rect x="1222" y="1062" width="1" height="7" fill="#000"/>
<text x="1221.5" y="1079" text-anchor="middle" class="ax">22:02</text>
<rect x="1282" y="1062" width="1" height="7" fill="#000"/>
<text x="1281.5" y="1079" text-anchor="middle" class="ax">22:16</text>
<rect x="1342" y="1062" width="1" height="7" fill="#000"/>
<text x="1341.5" y="1079" text-anchor="middle" class="ax">22:25</text>
<rect x="1402" y="1062" width="1" height="7" fill="#000"/>
<text x="1401.5" y="1079" text-anchor="middle" class="ax">22:42</text>
<rect x="1462" y="1062" width="1" height="7" fill="#000"/>
<text x="1461.5" y="1079" text-anchor="middle" class="ax">23:14</text>
<rect x="1519" y="63" width="7" height="1" fill="#000"/>
<text x="1527" y="68" class="ax">60,04</text>
<rect x="1519" y="102" width="7" height="1" fill="#000"/>
<text x="1527" y="107" class="ax">60,02</text>
<rect x="1519" y="141" width="7" height="1" fill="#000"/>
<text x="1527" y="146" class="ax">60,00</text>
<rect x="1519" y="180" width="7" height="1" fill="#000"/>
<text x="1527" y="185" class="ax">59,98</text>
<rect x="1519" y="219" width="7" height="1" fill="#000"/>
<text x="1527" y="224" class="ax">59,96</text>
<rect x="1519" y="258" width="7" height="1" fill="#000"/>
<text x="1527" y="263" class="ax">59,94</text>
<rect x="1519" y="296" width="7" height="1" fill="#000"/>
<text x="1527" y="301" class="ax">59,92</text>
<rect x="1519" y="335" width="7" height="1" fill="#000"/>
<text x="1527" y="340" class="ax">59,90</text>
<rect x="1519" y="374" width="7" height="1" fill="#000"/>
<text x="1527" y="379" class="ax">59,88</text>
<rect x="1519" y="413" width="7" height="1" fill="#000"/>
<text x="1527" y="418" class="ax">59,86</text>
<rect x="1519" y="452" width="7" height="1" fill="#000"/>
<text x="1527" y="457" class="ax">59,84</text>
<rect x="1519" y="491" width="7" height="1" fill="#000"/>
<text x="1527" y="496" class="ax">59,82</text>
<rect x="1519" y="530" width="7" height="1" fill="#000"/>
<text x="1527" y="535" class="ax">59,80</text>
<rect x="1519" y="568" width="7" height="1" fill="#000"/>
<text x="1527" y="573" class="ax">59,78</text>
<rect x="1519" y="607" width="7" height="1" fill="#000"/>
<text x="1527" y="612" class="ax">59,76</text>
<rect x="1519" y="646" width="7" height="1" fill="#000"/>
<text x="1527" y="651" class="ax">59,74</text>
<rect x="1519" y="685" width="7" height="1" fill="#000"/>
<text x="1527" y="690" class="ax">59,72</text>
<rect x="1519" y="724" width="7" height="1" fill="#000"/>
<text x="1527" y="729" class="ax">59,70</text>
<rect x="1519" y="763" width="7" height="1" fill="#000"/>
<text x="1527" y="768" class="ax">59,68</text>
<rect x="1519" y="802" width="7" height="1" fill="#000"/>
<text x="1527" y="807" class="ax">59,66</text>
<rect x="1519" y="1055" width="7" height="1" fill="#000"/>
<text x="1527" y="1060" class="ax">0</text>
<rect x="1519" y="1033" width="7" height="1" fill="#000"/>
<text x="1527" y="1038" class="ax">0,1</text>
<rect x="1519" y="1012" width="7" height="1" fill="#000"/>
<text x="1527" y="1017" class="ax">0,2</text>
<rect x="1519" y="990" width="7" height="1" fill="#000"/>
<text x="1527" y="995" class="ax">0,3</text>
<rect x="1519" y="969" width="7" height="1" fill="#000"/>
<text x="1527" y="974" class="ax">0,4</text>
<rect x="1519" y="948" width="7" height="1" fill="#000"/>
<text x="1527" y="953" class="ax">0,5</text>
<rect x="1519" y="926" width="7" height="1" fill="#000"/>
<text x="1527" y="931" class="ax">0,6</text>
<rect x="1519" y="905" width="7" height="1" fill="#000"/>
<text x="1527" y="910" class="ax">0,7</text>
<rect x="1519" y="883" width="7" height="1" fill="#000"/>
<text x="1527" y="888" class="ax">0,8</text>
<rect x="1519" y="862" width="7" height="1" fill="#000"/>
<text x="1527" y="867" class="ax">0,9</text>
<rect x="1519" y="840" width="7" height="1" fill="#000"/>
<text x="1527" y="845" class="ax">1</text>
<polygon points="1520.5,576 1526.5,569.5 1556.5,569.5 1556.5,582.5 1526.5,582.5" fill="#ff4500" stroke="#000" stroke-width="1"/>
<text x="1527.5" y="580" class="ax" fill="#fff">59,78</text>
<polygon points="1520.5,623 1526.5,616.5 1556.5,616.5 1556.5,629.5 1526.5,629.5" fill="#ffa500" stroke="#000" stroke-width="1"/>
<text x="1527.5" y="627" class="ax" fill="#000">59,75</text>
<polygon points="1520.5,627 1526.5,620.5 1556.5,620.5 1556.5,633.5 1526.5,633.5" fill="#000000" stroke="#000" stroke-width="1"/>
<text x="1527.5" y="631" class="ax" fill="#fff">59,75</text>
<polygon points="1520.5,654 1526.5,647.5 1556.5,647.5 1556.5,660.5 1526.5,660.5" fill="#ff0000" stroke="#000" stroke-width="1"/>
<text x="1527.5" y="658" class="ax" fill="#fff">59,74</text>
<polygon points="1520.5,716 1526.5,709.5 1556.5,709.5 1556.5,722.5 1526.5,722.5" fill="#ffa500" stroke="#000" stroke-width="1"/>
<text x="1527.5" y="720" class="ax" fill="#000">59,70</text>
<text x="11" y="72" class="ax">MT ZLEC, MT ZLEMA, MT ZLHATEMA, MT ZLTEMA, MTOrderPlot</text>
<text x="11" y="851" class="ax">Info Bar</text>
<text x="11" y="1060" class="ax">© 2015 NinjaTrader, LLC</text>
<g class="wm"><text transform="translate(946,730) rotate(-11.7)" textLength="390" lengthAdjust="spacing">www.trading-software-collection.com</text>
<text transform="translate(930,764) rotate(-12)" textLength="441" lengthAdjust="spacing">andreybbrv@gmail.com, Skype: andreybbrv</text></g>
</svg>
<div id="sb" class="abs"></div>
<div id="sbthumb" class="abs"></div>
<svg class="abs" style="left:12px;top:1096px" width="8" height="10" viewBox="0 0 8 10"><path d="M6 1L2 5L6 9" stroke="#505050" stroke-width="2" fill="none"/></svg>
<svg class="abs" style="left:1554px;top:1096px" width="8" height="10" viewBox="0 0 8 10"><path d="M2 1L6 5L2 9" stroke="#505050" stroke-width="2" fill="none"/></svg>
<div id="dlg" class="abs"></div><div id="dlgc" class="abs"></div>
<div id="dtitle" class="abs">Indicators</div>
<div id="dclose" class="abs">x</div>
<div class="abs" style="left:85px;top:535px;width:1px;height:420px;background:#8c8c8c"></div>
<div class="abs" style="left:85px;top:955px;width:562px;height:1px;background:#fbfbfb"></div>
<div class="abs lb" style="left:86px;top:535px;width:272px;height:240px;border-top:2px solid #767676;border-left:2px solid #767676;border-right:1px solid #a8a8a8;border-bottom:1px solid #a8a8a8"></div>
<div class="abs li" style="top:540px">MT Volume PCI</div>
<div class="abs li" style="top:553px">MT Volume Power</div>
<div class="abs li" style="top:566px">MT Volume Price Bias</div>
<div class="abs li" style="top:579px">MT Volume Price Bias Power</div>
<div class="abs li" style="top:592px">MT Volume Profile</div>
<div class="abs li" style="top:605px">MT Volume Profile Bias</div>
<div class="abs li" style="top:618px">MT Volume Profile Bias Power</div>
<div class="abs li" style="top:631px">MT Williams ACD</div>
<div class="abs li" style="top:644px">MT ZLEC</div>
<div class="abs li" style="top:657px">MT ZLEMA</div>
<div class="abs li" style="top:670px">MT ZLHATEMA</div>
<div class="abs li" style="top:683px">MT ZLTEMA</div>
<div class="abs li" style="top:696px">MTInfoBar</div>
<div class="abs li" style="top:709px">MTOrderPlot</div>
<div class="abs li" style="top:722px">NBarsDown</div>
<div class="abs li" style="top:735px">NBarsUp</div>
<div class="abs li" style="top:748px">OBV</div>
<div class="abs li" style="top:761px">OTG S&amp;R</div>
<div class="abs" style="left:340px;top:537px;width:17px;height:236px;background:#f0f0f0"></div>
<div class="abs" style="left:341px;top:693px;width:14px;height:17px;background:#cdcdcd"></div>
<svg class="abs" style="left:344px;top:543px" width="9" height="7" viewBox="0 0 9 7"><path d="M1 5.5L4.5 2L8 5.5" stroke="#505050" stroke-width="1.6" fill="none"/></svg>
<svg class="abs" style="left:344px;top:761px" width="9" height="7" viewBox="0 0 9 7"><path d="M1 1.5L4.5 5L8 1.5" stroke="#505050" stroke-width="1.6" fill="none"/></svg>
<div class="abs lb" style="left:86px;top:778px;width:272px;height:135px;border:1px solid #a0a0a8;border-left:2px solid #808088;border-bottom:1px solid #8a8e98"></div>
<div class="abs li" style="top:782px">MT ZLEC</div>
<div class="abs li" style="top:795px">MT ZLEMA</div>
<div class="abs li" style="top:808px">MT ZLHATEMA</div>
<div class="abs li" style="top:821px">MT ZLTEMA</div>
<div class="abs li" style="top:834px">Info Bar</div>
<div class="abs" style="left:89px;top:846px;width:267px;height:13px;background:#3399ff"></div>
<div class="abs li" style="top:847px;color:#fff">MTOrderPlot</div>
<div class="abs btn" style="left:112px;top:925px;width:66px;border-color:#d0d0d0;background:#efefef;color:#a0a0a0"><span>New</span></div>
<div class="abs btn" style="left:265px;top:925px;width:66px"><span>Remove</span></div>
<div class="abs btn" style="left:174px;top:986px;width:79px"><span>OK</span></div>
<div class="abs btn" style="left:327px;top:986px;width:78px;border-color:#3399ff;background:linear-gradient(#ebf4fc,#dcecfc)"><span>Apply</span></div>
<div class="abs btn" style="left:480px;top:986px;width:78px"><span>Close</span></div>
<div class="abs" style="left:366px;top:536px;width:279px;height:357px;box-sizing:border-box;border:1px solid #a0a0a0;border-top:2px solid #8c8c8c;border-left:2px solid #a8a8a8;background:#fff"></div>
<div class="abs" style="left:368px;top:538px;width:276px;height:17px;background:#c8c8c8"></div>
<div class="abs box" style="left:369px;top:542px"></div><div class="abs" style="left:371px;top:546px;width:5px;height:1px;background:#000"></div>
<div class="abs pg pgb" style="left:384px;top:540px">Data</div>
<div class="abs" style="left:368px;top:555px;width:13px;height:16px;background:#c8c8c8"></div>
<div class="abs" style="left:381px;top:570px;width:263px;height:1px;background:#d0d0d0"></div>
<div class="abs" style="left:497px;top:555px;width:1px;height:16px;background:#d0d0d0"></div>
<div class="abs" style="left:384px;top:556px;width:112px;height:15px;overflow:hidden"><div class="pg">Calculate on bar close</div></div>
<div class="abs pg pgb" style="left:501px;top:556px">False</div>
<div class="abs" style="left:368px;top:571px;width:13px;height:16px;background:#c8c8c8"></div>
<div class="abs" style="left:381px;top:586px;width:263px;height:1px;background:#d0d0d0"></div>
<div class="abs" style="left:497px;top:571px;width:1px;height:16px;background:#d0d0d0"></div>
<div class="abs" style="left:384px;top:572px;width:112px;height:15px;overflow:hidden"><div class="pg">Input series</div></div>
<div class="abs pg pgb" style="left:501px;top:572px">CL 07-15 (150 Tick)</div>
<div class="abs" style="left:368px;top:587px;width:13px;height:16px;background:#c8c8c8"></div>
<div class="abs" style="left:381px;top:602px;width:263px;height:1px;background:#d0d0d0"></div>
<div class="abs" style="left:497px;top:587px;width:1px;height:16px;background:#d0d0d0"></div>
<div class="abs" style="left:384px;top:588px;width:112px;height:15px;overflow:hidden"><div class="pg">Maximum bars look ba</div></div>
<div class="abs pg pgb" style="left:501px;top:588px">TwoHundredFiftySix</div>
<div class="abs" style="left:368px;top:602px;width:276px;height:17px;background:#c8c8c8"></div>
<div class="abs box" style="left:369px;top:606px"></div><div class="abs" style="left:371px;top:610px;width:5px;height:1px;background:#000"></div>
<div class="abs pg pgb" style="left:384px;top:604px">Visual</div>
<div class="abs" style="left:368px;top:619px;width:13px;height:16px;background:#c8c8c8"></div>
<div class="abs" style="left:381px;top:634px;width:263px;height:1px;background:#d0d0d0"></div>
<div class="abs" style="left:497px;top:619px;width:1px;height:16px;background:#d0d0d0"></div>
<div class="abs" style="left:384px;top:620px;width:112px;height:15px;overflow:hidden"><div class="pg">Auto scale</div></div>
<div class="abs pg pgb" style="left:501px;top:620px">False</div>
<div class="abs" style="left:368px;top:635px;width:13px;height:16px;background:#c8c8c8"></div>
<div class="abs" style="left:381px;top:650px;width:263px;height:1px;background:#d0d0d0"></div>
<div class="abs" style="left:497px;top:635px;width:1px;height:16px;background:#d0d0d0"></div>
<div class="abs" style="left:384px;top:636px;width:112px;height:15px;overflow:hidden"><div class="pg">Displacement</div></div>
<div class="abs pg pgb" style="left:501px;top:636px">0</div>
<div class="abs" style="left:368px;top:651px;width:13px;height:16px;background:#c8c8c8"></div>
<div class="abs" style="left:381px;top:666px;width:263px;height:1px;background:#d0d0d0"></div>
<div class="abs" style="left:497px;top:651px;width:1px;height:16px;background:#d0d0d0"></div>
<div class="abs" style="left:384px;top:652px;width:112px;height:15px;overflow:hidden"><div class="pg">Display in Data Box</div></div>
<div class="abs pg pgb" style="left:501px;top:652px">False</div>
<div class="abs" style="left:368px;top:667px;width:13px;height:16px;background:#c8c8c8"></div>
<div class="abs" style="left:381px;top:682px;width:263px;height:1px;background:#d0d0d0"></div>
<div class="abs" style="left:497px;top:667px;width:1px;height:16px;background:#d0d0d0"></div>
<div class="abs" style="left:381px;top:667px;width:116px;height:15px;background:#c8c8c8"></div>
<div class="abs" style="left:384px;top:668px;width:112px;height:15px;overflow:hidden"><div class="pg">Label</div></div>
<div class="abs pg pgb" style="left:501px;top:668px">MTOrderPlot</div>
<div class="abs" style="left:368px;top:683px;width:13px;height:16px;background:#c8c8c8"></div>
<div class="abs" style="left:381px;top:698px;width:263px;height:1px;background:#d0d0d0"></div>
<div class="abs" style="left:497px;top:683px;width:1px;height:16px;background:#d0d0d0"></div>
<div class="abs" style="left:384px;top:684px;width:112px;height:15px;overflow:hidden"><div class="pg">Panel</div></div>
<div class="abs pg pgb" style="left:501px;top:684px">Same as input series</div>
<div class="abs" style="left:368px;top:699px;width:13px;height:16px;background:#c8c8c8"></div>
<div class="abs" style="left:381px;top:714px;width:263px;height:1px;background:#d0d0d0"></div>
<div class="abs" style="left:497px;top:699px;width:1px;height:16px;background:#d0d0d0"></div>
<div class="abs" style="left:384px;top:700px;width:112px;height:15px;overflow:hidden"><div class="pg">Price marker(s)</div></div>
<div class="abs pg pgb" style="left:501px;top:700px">True</div>
<div class="abs" style="left:368px;top:715px;width:13px;height:16px;background:#c8c8c8"></div>
<div class="abs" style="left:381px;top:730px;width:263px;height:1px;background:#d0d0d0"></div>
<div class="abs" style="left:497px;top:715px;width:1px;height:16px;background:#d0d0d0"></div>
<div class="abs" style="left:384px;top:716px;width:112px;height:15px;overflow:hidden"><div class="pg">Scale justification</div></div>
<div class="abs pg pgb" style="left:501px;top:716px">Right</div>
<div class="abs" style="left:368px;top:730px;width:276px;height:17px;background:#c8c8c8"></div>
<div class="abs box" style="left:369px;top:734px"></div><div class="abs" style="left:371px;top:738px;width:5px;height:1px;background:#000"></div>
<div class="abs pg pgb" style="left:384px;top:732px">Plots</div>
<div class="abs" style="left:368px;top:747px;width:13px;height:16px;background:#c8c8c8"></div>
<div class="abs" style="left:381px;top:762px;width:263px;height:1px;background:#d0d0d0"></div>
<div class="abs" style="left:497px;top:747px;width:1px;height:16px;background:#d0d0d0"></div>
<div class="abs" style="left:384px;top:748px;width:112px;height:15px;overflow:hidden"><div class="pg">Entry</div></div>
<div class="abs box" style="left:369px;top:750px"></div><div class="abs" style="left:371px;top:754px;width:5px;height:1px;background:#000"></div><div class="abs" style="left:373px;top:752px;width:1px;height:5px;background:#000"></div>
<div class="abs" style="left:499px;top:749px;width:20px;height:12px;box-sizing:border-box;border:1px solid #000;background:#fff"></div>
<div class="abs" style="left:503px;top:754px;width:2px;height:6px;background:#00e5ee"></div><div class="abs" style="left:508px;top:756px;width:2px;height:4px;background:#00e5ee"></div><div class="abs" style="left:513px;top:751px;width:2px;height:9px;background:#00e5ee"></div>
<div class="abs pg pgb" style="left:527px;top:748px">Dot; Solid; 2px</div>
<div class="abs" style="left:368px;top:763px;width:13px;height:16px;background:#c8c8c8"></div>
<div class="abs" style="left:381px;top:778px;width:263px;height:1px;background:#d0d0d0"></div>
<div class="abs" style="left:497px;top:763px;width:1px;height:16px;background:#d0d0d0"></div>
<div class="abs" style="left:384px;top:764px;width:112px;height:15px;overflow:hidden"><div class="pg">Move</div></div>
<div class="abs box" style="left:369px;top:766px"></div><div class="abs" style="left:371px;top:770px;width:5px;height:1px;background:#000"></div><div class="abs" style="left:373px;top:768px;width:1px;height:5px;background:#000"></div>
<div class="abs" style="left:499px;top:765px;width:20px;height:12px;box-sizing:border-box;border:1px solid #000;background:#fff"></div>
<div class="abs" style="left:503px;top:770px;width:2px;height:6px;background:#909090"></div><div class="abs" style="left:508px;top:772px;width:2px;height:4px;background:#909090"></div><div class="abs" style="left:513px;top:767px;width:2px;height:9px;background:#909090"></div>
<div class="abs pg pgb" style="left:527px;top:764px">Dot; Solid; 2px</div>
<div class="abs" style="left:368px;top:779px;width:13px;height:16px;background:#c8c8c8"></div>
<div class="abs" style="left:381px;top:794px;width:263px;height:1px;background:#d0d0d0"></div>
<div class="abs" style="left:497px;top:779px;width:1px;height:16px;background:#d0d0d0"></div>
<div class="abs" style="left:384px;top:780px;width:112px;height:15px;overflow:hidden"><div class="pg">Position</div></div>
<div class="abs box" style="left:369px;top:782px"></div><div class="abs" style="left:371px;top:786px;width:5px;height:1px;background:#000"></div><div class="abs" style="left:373px;top:784px;width:1px;height:5px;background:#000"></div>
<div class="abs" style="left:499px;top:781px;width:20px;height:12px;box-sizing:border-box;border:1px solid #000;background:#fff"></div>
<div class="abs" style="left:503px;top:786px;width:2px;height:6px;background:#000000"></div><div class="abs" style="left:508px;top:788px;width:2px;height:4px;background:#000000"></div><div class="abs" style="left:513px;top:783px;width:2px;height:9px;background:#000000"></div>
<div class="abs pg pgb" style="left:527px;top:780px">Dot; Solid; 2px</div>
<div class="abs" style="left:368px;top:795px;width:13px;height:16px;background:#c8c8c8"></div>
<div class="abs" style="left:381px;top:810px;width:263px;height:1px;background:#d0d0d0"></div>
<div class="abs" style="left:497px;top:795px;width:1px;height:16px;background:#d0d0d0"></div>
<div class="abs" style="left:384px;top:796px;width:112px;height:15px;overflow:hidden"><div class="pg">Stop Loss</div></div>
<div class="abs box" style="left:369px;top:798px"></div><div class="abs" style="left:371px;top:802px;width:5px;height:1px;background:#000"></div><div class="abs" style="left:373px;top:800px;width:1px;height:5px;background:#000"></div>
<div class="abs" style="left:499px;top:797px;width:20px;height:12px;box-sizing:border-box;border:1px solid #000;background:#fff"></div>
<div class="abs" style="left:503px;top:802px;width:2px;height:6px;background:#ff0000"></div><div class="abs" style="left:508px;top:804px;width:2px;height:4px;background:#ff0000"></div><div class="abs" style="left:513px;top:799px;width:2px;height:9px;background:#ff0000"></div>
<div class="abs pg pgb" style="left:527px;top:796px">Dot; Solid; 2px</div>
<div class="abs" style="left:368px;top:811px;width:13px;height:16px;background:#c8c8c8"></div>
<div class="abs" style="left:381px;top:826px;width:263px;height:1px;background:#d0d0d0"></div>
<div class="abs" style="left:497px;top:811px;width:1px;height:16px;background:#d0d0d0"></div>
<div class="abs" style="left:384px;top:812px;width:112px;height:15px;overflow:hidden"><div class="pg">Target</div></div>
<div class="abs box" style="left:369px;top:814px"></div><div class="abs" style="left:371px;top:818px;width:5px;height:1px;background:#000"></div><div class="abs" style="left:373px;top:816px;width:1px;height:5px;background:#000"></div>
<div class="abs" style="left:499px;top:813px;width:20px;height:12px;box-sizing:border-box;border:1px solid #000;background:#fff"></div>
<div class="abs" style="left:503px;top:818px;width:2px;height:6px;background:#008000"></div><div class="abs" style="left:508px;top:820px;width:2px;height:4px;background:#008000"></div><div class="abs" style="left:513px;top:815px;width:2px;height:9px;background:#008000"></div>
<div class="abs pg pgb" style="left:527px;top:812px">Dot; Solid; 2px</div>
<div class="abs" style="left:368px;top:826px;width:276px;height:17px;background:#c8c8c8"></div>
<div class="abs box" style="left:369px;top:830px"></div><div class="abs" style="left:371px;top:834px;width:5px;height:1px;background:#000"></div>
<div class="abs pg pgb" style="left:384px;top:828px">Visual</div>
<div class="abs" style="left:368px;top:843px;width:13px;height:16px;background:#c8c8c8"></div>
<div class="abs" style="left:381px;top:858px;width:263px;height:1px;background:#d0d0d0"></div>
<div class="abs" style="left:497px;top:843px;width:1px;height:16px;background:#d0d0d0"></div>
<div class="abs" style="left:384px;top:844px;width:112px;height:15px;overflow:hidden"><div class="pg">OrderBackColor</div></div>
<div class="abs" style="left:499px;top:845px;width:20px;height:12px;box-sizing:border-box;border:1px solid #000;background:#fff"></div>
<div class="abs pg pgb" style="left:527px;top:844px">White</div>
<div class="abs" style="left:368px;top:859px;width:13px;height:16px;background:#c8c8c8"></div>
<div class="abs" style="left:381px;top:874px;width:263px;height:1px;background:#d0d0d0"></div>
<div class="abs" style="left:497px;top:859px;width:1px;height:16px;background:#d0d0d0"></div>
<div class="abs" style="left:384px;top:860px;width:112px;height:15px;overflow:hidden"><div class="pg">Width</div></div>
<div class="abs pg pgb" style="left:501px;top:860px">3</div>
<div class="abs" style="left:366px;top:896px;width:279px;height:59px;box-sizing:border-box;border:1px solid #a0a0a0;background:#f0f0f0"></div>
<div class="abs pg pgb" style="left:371px;top:899px">Label</div>
<div class="abs pg" style="left:371px;top:914px;transform:scaleX(.917)">MT Order Plotter v7.0.0.51</div>
<div class="abs" style="left:644px;top:1011px;width:2px;height:2px;background:#b8b8b8"></div>
<div class="abs" style="left:640px;top:1015px;width:2px;height:2px;background:#b8b8b8"></div>
<div class="abs" style="left:644px;top:1015px;width:2px;height:2px;background:#b8b8b8"></div>
<div class="abs" style="left:636px;top:1019px;width:2px;height:2px;background:#b8b8b8"></div>
<div class="abs" style="left:640px;top:1019px;width:2px;height:2px;background:#b8b8b8"></div>
<div class="abs" style="left:644px;top:1019px;width:2px;height:2px;background:#b8b8b8"></div>
</body></html>
